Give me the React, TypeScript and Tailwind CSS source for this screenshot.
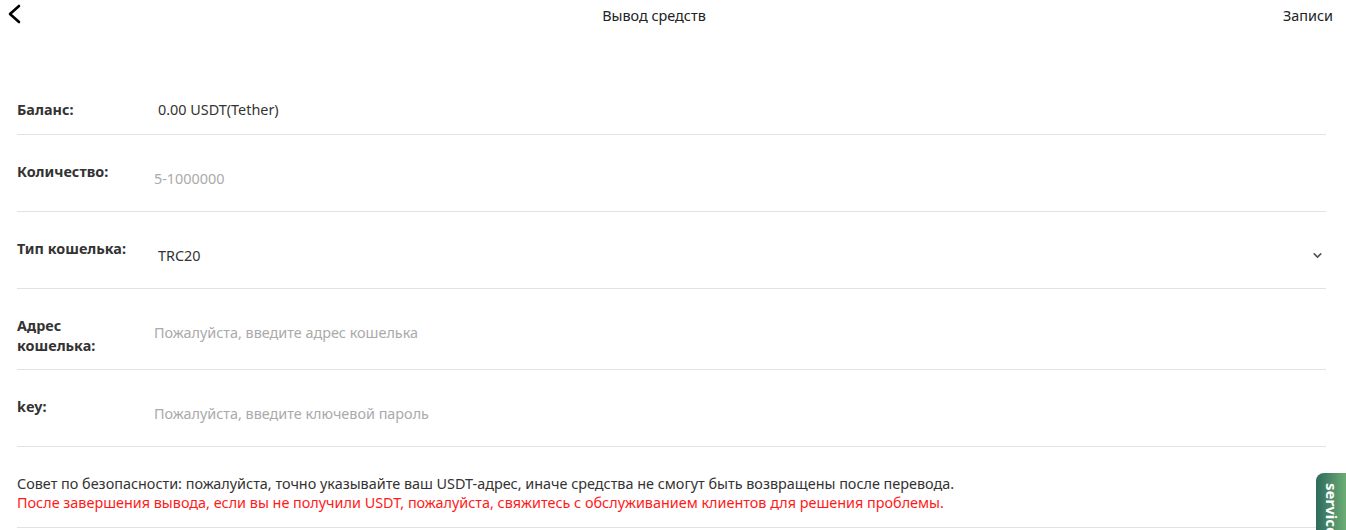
import { ChevronDown } from 'lucide-react';

const FONT = { fontFamily: '"Noto Sans", "Open Sans", Arial, sans-serif' };

type Row = { label: string; value: string; placeholder?: boolean; select?: boolean; tall?: boolean };

const ROWS: Row[] = [
  { label: 'Количество:', value: '5-1000000', placeholder: true },
  { label: 'Тип кошелька:', value: 'TRC20', select: true },
  { label: 'Адрес кошелька:', value: 'Пожалуйста, введите адрес кошелька', placeholder: true, tall: true },
  { label: 'key:', value: 'Пожалуйста, введите ключевой пароль', placeholder: true },
];

export default function App() {
  return (
    <div className="relative w-[1346px] h-[530px] overflow-hidden bg-white text-[#333]" style={FONT}>
      {/* Header */}
      <div className="flex items-center h-[32px]">
        <div className="w-[30px] pl-[7px] -mt-[5px]">
          <svg width="16" height="20" viewBox="0 0 16 20" fill="none" stroke="#000" strokeWidth="2.6" strokeLinecap="round" strokeLinejoin="round">
            <path d="M12 2 L3 10 L12 18" />
          </svg>
        </div>
        <div className="flex-1 text-center text-[14.4px] text-[#222]">Вывод средств</div>
        <div className="w-[68px] text-right pr-[13px] text-[14.4px] text-[#222]">Записи</div>
      </div>

      <div className="pl-[17px] pr-[20px] mt-[53px]">
        {/* Balance */}
        <div className="flex items-center h-[50px] border-b border-[#e2e2e2]">
          <div className="w-[141px] text-[14.4px] font-bold">Баланс:</div>
          <div className="text-[14.4px]">0.00 USDT(Tether)</div>
        </div>

        {ROWS.map(r => (
          <div key={r.label} className={r.tall ? 'flex items-start pt-[24px] pb-[13px] border-b border-[#e2e2e2]' : 'flex items-start pt-[24px] pb-[12px] border-b border-[#e2e2e2]'}>
            <div className="w-[137px] mt-[3px] text-[14.4px] leading-5 font-bold pr-[22px]">{r.label}</div>
            <div className="flex-1 h-10 flex items-center">
              {r.select ? (
                <div className="flex-1 flex items-center justify-between pl-[4px]">
                  <span className="text-[14.4px]">TRC20</span>
                  <ChevronDown size={13} strokeWidth={3} className="text-[#555] mr-[2px]" />
                </div>
              ) : (
                <span className={r.placeholder ? 'text-[14.4px] text-[#aaa]' : 'text-[14.4px]'}>{r.value}</span>
              )}
            </div>
          </div>
        ))}

        {/* Notice */}
        <div className="pt-[27px] pb-[15px] border-b border-[#e2e2e2]">
          <p className="text-[14.4px] leading-[19px]">Совет по безопасности: пожалуйста, точно указывайте ваш USDT-адрес, иначе средства не смогут быть возвращены после перевода.</p>
          <p className="text-[14.4px] leading-[19px] text-[#ff1a1a]">После завершения вывода, если вы не получили USDT, пожалуйста, свяжитесь с обслуживанием клиентов для решения проблемы.</p>
        </div>
      </div>

      {/* Service tab */}
      <div className="absolute right-0 top-[473px] w-[30px] h-[80px] rounded-tl-[8px] bg-gradient-to-r from-[#2d6a5c] to-[#6cad74] flex justify-center pt-[10px]">
        <span className="text-white font-bold text-[15px] leading-none [writing-mode:vertical-rl]">service</span>
      </div>
    </div>
  );
}
